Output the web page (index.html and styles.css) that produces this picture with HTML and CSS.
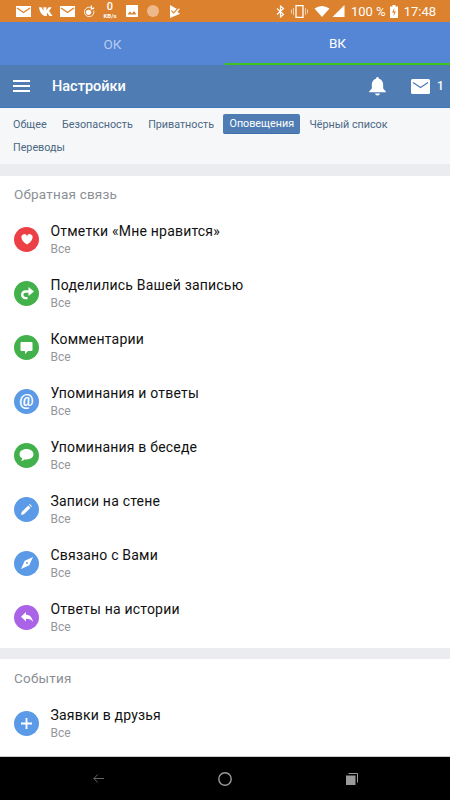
FILE: index.html
```html
<!DOCTYPE html>
<html lang="ru">
<head>
    <meta charset="UTF-8">
    <title>Настройки</title>
    <link rel="stylesheet" href="styles.css">
</head>
<body>
<div class="screen">
    <!-- status bar -->
    <div class="status">
        <div class="status-left">
            <svg width="15" height="11" viewBox="0 0 15 11"><path fill="#fff" d="M0 0h15v11H0z"/><path fill="none" stroke="#dc822e" stroke-width="1.4" d="M1 2l6.500 4.500L14 2"/></svg>
            <svg width="14" height="9" viewBox="0 0 16 10"><path fill="#fff" d="M0 0h3l2 4V0h3.500v3.500L11 0h3.500l-3 4.500L15.500 10H12L9 6v4H7.500C3.500 10 1 6 0 0z"/></svg>
            <svg width="15" height="11" viewBox="0 0 15 11"><path fill="#fff" d="M0 0h15v11H0z"/><path fill="none" stroke="#dc822e" stroke-width="1.4" d="M1 2l6.500 4.500L14 2"/></svg>
            <svg width="12" height="13" viewBox="0 0 14 14"><path fill="none" stroke="#fff" stroke-width="1" d="M9 2.300A5.500 5.500 0 1 0 12.500 6"/><circle cx="6.500" cy="8" r="3" fill="#fff"/><path fill="#fff" d="M9 0h1.500v3L13 2v2l-4 1z"/></svg>
            <div class="speed"><b>0</b><span>KB/s</span></div>
            <svg width="12" height="12" viewBox="0 0 12 12"><path fill="#fff" d="M0 0h12v12H0z"/><path fill="#dc822e" d="M1.500 9.500l2.500-3 2 2 2-2.500 2.500 3.500z"/></svg>
            <span class="dot"></span>
            <svg class="flag" width="11" height="13" viewBox="0 0 12 14"><path fill="#fff" d="M0 0l7 4h4L8 7.500l3 2L0 14z"/><path fill="none" stroke="#dc822e" stroke-width="1.200" d="M1.500 6L4 8.500l4.500-5"/></svg>
        </div>
        <div class="status-right">
            <svg width="9" height="13" viewBox="0 0 9 13"><path fill="none" stroke="#fff" stroke-width="1.200" d="M1 3.500l6.500 6L4.500 12V1l3 2.500-6.500 6"/></svg>
            <svg width="17" height="13" viewBox="0 0 17 13"><path fill="none" stroke="#fff" stroke-width="1.300" d="M5 .7h7v11.600H5z"/><path fill="none" stroke="#fff" stroke-opacity=".6" d="M2.500 3v7M.5 4.500v4M14.500 3v7M16.500 4.500v4"/></svg>
            <svg width="16" height="11" viewBox="0 0 15 11"><path fill="#fff" d="M0 2.500Q7.500-2.500 15 2.500L7.500 11z"/></svg>
            <svg class="signal" width="13" height="12" viewBox="0 0 12 12"><path fill="#fff" d="M12 0v12H0z"/></svg>
            <span class="percent">100 %</span>
            <svg width="8" height="13" viewBox="0 0 8 13"><path fill="#fff" d="M2.500 0h3v1.500H8V13H0V1.500h2.500z"/><path fill="#dc822e" d="M4.500 3L2 7.500h2L3.500 11 6 6.500H4z"/></svg>
            <span class="clock">17:48</span>
        </div>
    </div>

    <!-- OK / VK switch -->
    <div class="switch">
        <div class="switch-item">ОК</div>
        <div class="switch-item active">ВК</div>
    </div>

    <div class="header">
        <div class="burger"><i></i><i></i><i></i></div>
        <div class="header-title">Настройки</div>
        <svg width="17" height="19" viewBox="0 0 18 20"><path fill="#fff" d="M9 0a1.600 1.600 0 0 1 1.600 1.700C13.500 2.500 15 5 15 8v4l3 3.500v.5H0v-.5L3 12V8c0-3 1.500-5.500 4.400-6.300A1.600 1.600 0 0 1 9 0zM6.500 17.500h5a2.500 2 0 0 1-5 0z"/></svg>
        <svg class="mail" width="19" height="15" viewBox="0 0 19 15"><rect width="19" height="15" rx="1.500" fill="#fff"/><path fill="none" stroke="#4f7db3" stroke-width="1.300" d="M2 3.500l7.500 5 7.500-5"/></svg>
        <div class="mail-count">1</div>
    </div>

    <div class="content">
        <div class="tabs">
            <a class="tab">Общее</a>
            <a class="tab">Безопасность</a>
            <a class="tab">Приватность</a>
            <a class="tab current">Оповещения</a>
            <a class="tab">Чёрный список</a>
            <a class="tab">Переводы</a>
        </div>

        <div class="section">
            <div class="section-title">Обратная связь</div>
            <div class="row">
                <div class="icon red"><svg width="12" height="11" viewBox="0 0 13 12"><path fill="#fff" d="M6.500 11.500C3 9 .5 6.800.5 4A3 3 0 0 1 6.500 2.500 3 3 0 0 1 12.500 4c0 2.800-2.500 5-6 7.500z"/></svg></div>
                <div class="row-text"><div class="row-title">Отметки «Мне нравится»</div><div class="row-sub">Все</div></div>
            </div>
            <div class="row">
                <div class="icon green"><svg width="14" height="13" viewBox="0 0 14 13"><path fill="none" stroke="#fff" stroke-width="2.400" d="M9 4.500H5.500A3.300 3.300 0 0 0 2.200 7.800v0a3.300 3.300 0 0 0 3.300 3.300H7.500"/><path fill="#fff" d="M8.500 0L14 4.500 8.500 9z"/></svg></div>
                <div class="row-text"><div class="row-title">Поделились Вашей записью</div><div class="row-sub">Все</div></div>
            </div>
            <div class="row">
                <div class="icon green"><svg width="13" height="13" viewBox="0 0 13 13"><path fill="#fff" d="M1.500 1h10A1 1 0 0 1 12.500 2v7a1 1 0 0 1-1 1H8l-3 3v-3H1.500a1 1 0 0 1-1-1V2a1 1 0 0 1 1-1z"/></svg></div>
                <div class="row-text"><div class="row-title">Комментарии</div><div class="row-sub">Все</div></div>
            </div>
            <div class="row">
                <div class="icon blue"><span class="at">@</span></div>
                <div class="row-text"><div class="row-title">Упоминания и ответы</div><div class="row-sub">Все</div></div>
            </div>
            <div class="row">
                <div class="icon green"><svg width="15" height="14" viewBox="0 0 15 14"><path fill="#fff" d="M7.500 1C11.500 1 14.500 3.300 14.500 6.300S11.500 11.500 7.500 11.500c-.6 0-1.200 0-1.700-.2C4.800 12.300 3.500 13 2 13c.7-.8 1.100-1.700 1.200-2.800C1.500 9.300.5 7.900.5 6.300.5 3.300 3.500 1 7.500 1z"/></svg></div>
                <div class="row-text"><div class="row-title">Упоминания в беседе</div><div class="row-sub">Все</div></div>
            </div>
            <div class="row">
                <div class="icon blue"><svg width="11" height="11" viewBox="0 0 13 13"><path fill="#fff" d="M0 13l.8-3.500L8.500 1.800l2.700 2.700L3.500 12.200zM9.400 1l1-1L13 2.600l-1 1z"/></svg></div>
                <div class="row-text"><div class="row-title">Записи на стене</div><div class="row-sub">Все</div></div>
            </div>
            <div class="row">
                <div class="icon blue"><svg width="12" height="12" viewBox="0 0 13 13"><path fill="#fff" fill-rule="evenodd" d="M13 0L9 9 0 13 4 4zM6.500 5.500a1 1 0 1 0 0 2 1 1 0 0 0 0-2z"/></svg></div>
                <div class="row-text"><div class="row-title">Связано с Вами</div><div class="row-sub">Все</div></div>
            </div>
            <div class="row">
                <div class="icon purple"><svg width="12" height="10" viewBox="0 0 12 10"><path fill="#fff" d="M5 0v2.800c4 0 6.300 2.700 7 7.200-1.300-2.200-3.500-3.200-7-3.200V9.500L0 4.800z"/></svg></div>
                <div class="row-text"><div class="row-title">Ответы на истории</div><div class="row-sub">Все</div></div>
            </div>
        </div>

        <div class="section last">
            <div class="section-title">События</div>
            <div class="row">
                <div class="icon blue"><svg width="11" height="11" viewBox="0 0 11 11"><path fill="#fff" d="M4.600 0h1.800v4.600H11v1.800H6.400V11H4.600V6.400H0V4.600h4.600z"/></svg></div>
                <div class="row-text"><div class="row-title">Заявки в друзья</div><div class="row-sub">Все</div></div>
            </div>
        </div>
    </div>

    <div class="nav">
        <svg width="11" height="9" viewBox="0 0 11 9"><path fill="none" stroke="#666" d="M11 4.500H1M4.800.5L.8 4.500l4 4"/></svg>
        <svg width="14" height="14" viewBox="0 0 14 14"><circle cx="7" cy="7" r="6.200" fill="none" stroke="#9a9a9a" stroke-width="1.400"/></svg>
        <svg width="12" height="12" viewBox="0 0 12 12"><path fill="#9a9a9a" d="M0 2.500h9.500V12H0z"/><path fill="none" stroke="#9a9a9a" d="M2.500.5h9V9.500"/></svg>
    </div>
</div>
</body>
</html>
```

FILE: styles.css
```css
* {
    margin: 0;
    padding: 0;
    box-sizing: border-box;
}

body {
    font-family: Roboto, "Noto Sans", sans-serif;
    background: #fff;
}

.screen {
    width: 450px;
    height: 800px;
    display: flex;
    flex-direction: column;
    overflow: hidden;
}

.status {
    height: 22px;
    flex: none;
    background: #dc822e;
    color: #fff;
    display: flex;
    justify-content: space-between;
    align-items: center;
    padding: 0 14px 0 16px;
}

.status-left {
    display: flex;
    align-items: center;
    gap: 7.5px;
}

.status-right {
    display: flex;
    align-items: center;
    gap: 6px;
}

.speed {
    display: flex;
    flex-direction: column;
    align-items: center;
    width: 16px;
    line-height: 8px;
}

.speed b {
    font-size: 11px;
    font-weight: 500;
    line-height: 10px;
}

.speed span {
    font-size: 6px;
    font-weight: 700;
}

.dot {
    width: 12px;
    height: 12px;
    margin-left: 2px;
    border-radius: 50%;
    background: #eeb98a;
}

.flag {
    margin-left: 3px;
}

.signal {
    margin-left: -4px;
}

.percent {
    margin-right: -2px;
}

.percent,
.clock {
    font-size: 13px;
}

.switch {
    height: 43px;
    flex: none;
    background: #5585d5;
    display: flex;
}

.switch-item {
    flex: 1;
    display: flex;
    align-items: center;
    justify-content: center;
    padding-top: 1px;
    font-size: 13.5px;
    color: #b9cdee;
}

.switch-item.active {
    color: #fff;
    border-bottom: 2px solid #3fc41c;
}

.header {
    height: 43px;
    flex: none;
    background: #4f7db3;
    border-bottom: 1px solid #4176b8;
    color: #fff;
    display: flex;
    align-items: center;
    padding: 0 3px 0 13px;
}

.burger {
    width: 17px;
    display: flex;
    flex-direction: column;
    gap: 3px;
}

.burger i {
    display: block;
    height: 2px;
    background: #fff;
}

.header-title {
    flex: 1;
    margin-left: 22px;
    font-size: 14.5px;
    font-weight: 500;
}

.mail {
    margin-left: 25px;
}

.mail-count {
    width: 10px;
    margin-left: 7px;
    font-size: 12px;
    font-weight: 500;
}

.content {
    flex: 1;
    min-height: 0;
    overflow: hidden;
    background: #ebecef;
    display: flex;
    flex-direction: column;
}

.tabs {
    height: 56px;
    flex: none;
    background: #f6f7f8;
    padding: 6px 7px;
    margin-bottom: 12px;
    display: flex;
    flex-wrap: wrap;
    align-content: flex-start;
    row-gap: 2px;
}

.tab {
    height: 21px;
    line-height: 21px;
    padding: 0 6px;
    margin-right: 3.4px;
    border-radius: 2px;
    font-size: 10.75px;
    color: #4a6785;
}

.tab.current {
    height: 20px;
    line-height: 19px;
    background: #4f7db3;
    border-bottom: 1px solid #3f70ab;
    color: #fff;
}

.section {
    flex: none;
    background: #fff;
    padding-bottom: 4px;
    margin-bottom: 11px;
}

.section.last {
    flex: 1;
    margin-bottom: 0;
}

.section-title {
    height: 36px;
    padding: 0 14px;
    display: flex;
    align-items: center;
    font-size: 13.5px;
    letter-spacing: .2px;
    color: #8b8f94;
}

.last .section-title {
    height: 37px;
}

.row {
    height: 54px;
    display: flex;
    align-items: center;
    padding-left: 14px;
}

.icon {
    width: 25px;
    height: 25px;
    border-radius: 50%;
    flex: none;
    display: flex;
    align-items: center;
    justify-content: center;
}

.red {
    background: #ec3f46;
}

.green {
    background: #43b14b;
}

.blue {
    background: #5b9ae6;
}

.purple {
    background: #aa63e6;
}

.at {
    color: #fff;
    font-size: 16px;
    font-weight: 700;
    line-height: 16px;
}

.row-text {
    margin-left: 11.5px;
    padding-top: 1px;
}

.row-title {
    font-size: 14px;
    line-height: 18px;
    letter-spacing: .2px;
    color: #111;
}

.row-sub {
    margin-top: 1px;
    font-size: 12px;
    line-height: 16px;
    color: #93979c;
}

.nav {
    height: 44px;
    flex: none;
    background: #000;
    border-top: 1px solid #ccc;
    display: flex;
    align-items: center;
    justify-content: center;
    gap: 114px;
}
```
